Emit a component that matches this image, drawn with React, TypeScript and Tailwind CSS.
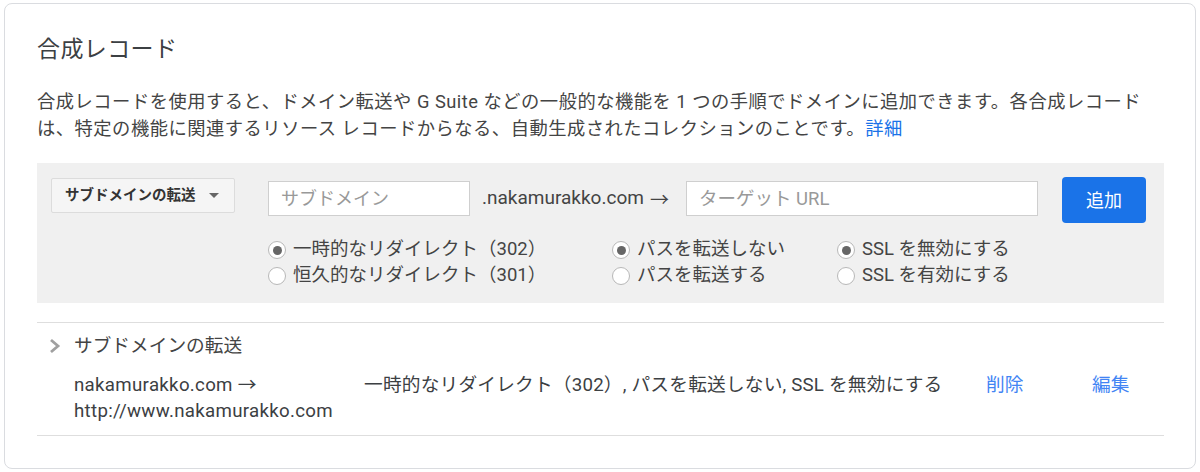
const font = "font-['Roboto','Noto_Sans_CJK_JP',sans-serif]";

function Arrow() {
  return <span className="font-['Noto_Sans_CJK_JP',sans-serif] leading-none">→</span>;
}

function Radio({ checked, label }: { checked?: boolean; label: string }) {
  return (
    <label className="flex items-center gap-[7px] h-[26px]">
      <span className="w-[18px] h-[18px] rounded-full border border-[#b8b8b8] bg-white flex items-center justify-center shrink-0">
        {checked && <span className="w-[9px] h-[9px] rounded-full bg-[#666]" />}
      </span>
      <span className="whitespace-nowrap">{label}</span>
    </label>
  );
}

export default function App() {
  return (
    <div className={`${font} bg-white w-[1200px] h-[472px] pt-[3px] pl-[4px] text-[#3c4043]`}>
      <div className="w-[1192px] h-[466px] rounded-[8px] border border-[#dadce0] pl-[32px] pr-[31px] pt-[30px]">
        {/* Title */}
        <h2 className="text-[23px] leading-[32px] tracking-[0.4px] text-[#3c4043]">合成レコード</h2>

        {/* Description */}
        <p className="mt-[22px] text-[18.3px] leading-[27px] tracking-[0.5px] text-[#444]">
          合成レコードを使用すると、ドメイン転送や G Suite などの一般的な機能を 1 つの手順でドメインに追加できます。各合成レコードは、特定の機能に関連するリソース レコードからなる、自動生成されたコレクションのことです。
          <a className="text-[#1a73e8]">詳細</a>
        </p>

        {/* Add panel */}
        <div className="mt-[21px] bg-[#f0f0f0] h-[140px] flex pl-[14px] pr-[18px] pt-[14px]">
          <div className="w-[217px] shrink-0 pt-px">
            <button className="w-[184px] h-[35px] bg-[#f5f5f5] border border-[#dcdcdc] rounded-[2px] flex items-center pl-[13px] text-[14.5px] font-bold text-[#333]">
              サブドメインの転送
              <span className="ml-[13px] w-0 h-0 border-l-[5px] border-r-[5px] border-t-[5px] border-l-transparent border-r-transparent border-t-[#666]" />
            </button>
          </div>
          <div className="flex-1">
            <div className="flex items-start">
              <input
                placeholder="サブドメイン"
                className="mt-[4px] w-[202px] h-[35px] bg-white border border-[#cfcfcf] px-[12px] text-[18px] placeholder:text-[#999] outline-none"
              />
              <span className="mt-[4px] ml-[12px] w-[191px] h-[35px] flex items-center gap-[6px] text-[19px] text-[#444] whitespace-nowrap">
                .nakamurakko.com <Arrow />
              </span>
              <input
                placeholder="ターゲット URL"
                className="mt-[4px] ml-[13px] w-[352px] h-[35px] bg-white border border-[#cfcfcf] px-[12px] text-[18.5px] placeholder:text-[#999] outline-none"
              />
              <button className="ml-auto w-[84px] h-[46px] rounded-[4px] bg-[#1a73e8] text-white text-[18px]">
                追加
              </button>
            </div>
            <div className="mt-[14px] grid grid-cols-[344px_225px_1fr] text-[18.5px] text-[#444]">
              <div>
                <Radio checked label="一時的なリダイレクト（302）" />
                <Radio label="恒久的なリダイレクト（301）" />
              </div>
              <div>
                <Radio checked label="パスを転送しない" />
                <Radio label="パスを転送する" />
              </div>
              <div>
                <Radio checked label="SSL を無効にする" />
                <Radio label="SSL を有効にする" />
              </div>
            </div>
          </div>
        </div>

        {/* Records */}
        <div className="mt-[19px] border-t border-[#dedede]">
          <div className="flex items-center h-[26px] mt-[10px] text-[18.7px] text-[#444]">
            <svg width="37" height="16" viewBox="0 0 37 16" className="shrink-0">
              <polyline points="14,2 21,8 14,14" fill="none" stroke="#a0a0a0" strokeWidth="2.8" />
            </svg>
            サブドメインの転送
          </div>
          <div className="mt-[13px] pb-[11px] border-b border-[#dedede] flex text-[18.7px] leading-[26px] text-[#3c4043]">
            <div className="w-[327px] pl-[37px] shrink-0 tracking-[0.3px]">
              <div className="h-[26px]">
                nakamurakko.com <Arrow />
              </div>
              <div className="h-[26px]">http://www.nakamurakko.com</div>
            </div>
            <div className="w-[622px] shrink-0 tracking-[0.2px] whitespace-nowrap">
              一時的なリダイレクト（302）, パスを転送しない, SSL を無効にする
            </div>
            <a className="w-[106px] shrink-0 text-[#4285f4]">削除</a>
            <a className="text-[#4285f4]">編集</a>
          </div>
        </div>
      </div>
    </div>
  );
}
